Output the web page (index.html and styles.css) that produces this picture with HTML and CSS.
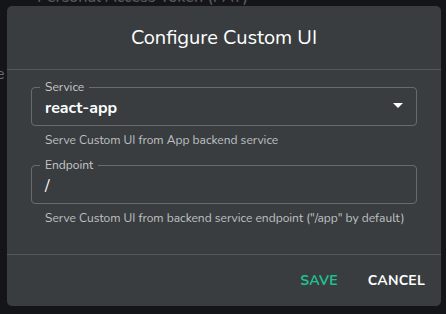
FILE: index.html
```html
<!DOCTYPE html>
<html>
<head>
<meta charset="utf-8">
<link rel="stylesheet" href="styles.css">
</head>
<body>
<div class="page">
  <div class="page-top">Personal Access Token (PAT)</div>
  <div class="page-e">e</div>
</div>
<div class="dialog">
  <div class="dialog-header">Configure Custom UI</div>
  <div class="dialog-body">
    <div class="field">
      <fieldset class="outline">
        <legend>Service</legend>
      </fieldset>
      <div class="value">react-app</div>
      <svg class="arrow" width="10" height="5" viewBox="0 0 10 5"><path d="M0 0h10L5 5z" fill="#fff"/></svg>
    </div>
    <div class="helper">Serve Custom UI from App backend service</div>
    <div class="field field-2">
      <fieldset class="outline">
        <legend>Endpoint</legend>
      </fieldset>
      <div class="value value-thin">/</div>
    </div>
    <div class="helper">Serve Custom UI from backend service endpoint ("/app" by default)</div>
  </div>
  <div class="dialog-footer">
    <button class="btn btn-save">SAVE</button>
    <button class="btn btn-cancel">CANCEL</button>
  </div>
</div>
</body>
</html>
```
FILE: styles.css
```css
html, body {
  margin: 0;
  padding: 0;
  width: 446px;
  height: 314px;
  overflow: hidden;
  background: #131518;
  font-family: "Nunito", "Lato", "Open Sans", sans-serif;
}
.page {
  position: relative;
  width: 446px;
  height: 314px;
}
.page-top {
  position: absolute;
  left: 37px;
  top: -14px;
  font-size: 16px;
  font-weight: 600;
  color: #55595d;
}
.page-e {
  position: absolute;
  left: -4px;
  top: 63px;
  font-size: 16px;
  color: #6a6e72;
}
.dialog {
  position: absolute;
  left: 7px;
  top: 6px;
  width: 434px;
  height: 300px;
  background: #393d40;
  border-radius: 5px;
  display: flex;
  flex-direction: column;
  color: #fff;
}
.dialog-header {
  height: 64px;
  display: flex;
  align-items: center;
  justify-content: center;
  font-size: 20px;
  border-bottom: 1px solid #53575b;
  box-sizing: border-box;
}
.dialog-body {
  flex: 1;
  padding: 11px 24px 0 24px;
  border-bottom: 1px solid #53575b;
}
.field {
  position: relative;
  height: 45px;
}
.field-2 {
  margin-top: 11px;
}
.outline {
  position: absolute;
  left: 0;
  right: 0;
  top: 0;
  bottom: 0;
  margin: 0;
  padding: 0 8px;
  border: 1px solid #686c70;
  border-radius: 4px;
}
.outline legend {
  padding: 0 5px;
  font-size: 12px;
  color: #c7c9cb;
  line-height: 12px;
}
.value {
  position: absolute;
  left: 14px;
  top: 16px;
  font-size: 16px;
  font-weight: 700;
  color: #fff;
}
.value-thin {
  font-weight: 400;
}
.arrow {
  position: absolute;
  right: 14px;
  top: 22px;
}
.helper {
  margin-top: 6px;
  padding-left: 14px;
  font-size: 12px;
  color: #bfc1c3;
}
.dialog-footer {
  height: 51px;
  display: flex;
  align-items: center;
  justify-content: flex-end;
  padding-right: 8px;
  gap: 14px;
}
.btn {
  background: none;
  border: none;
  font-family: inherit;
  font-size: 14px;
  font-weight: 700;
  padding: 6px 8px;
  letter-spacing: 0.2px;
}
.btn-save {
  color: #1fc08c;
}
.btn-cancel {
  color: #fff;
}
```
